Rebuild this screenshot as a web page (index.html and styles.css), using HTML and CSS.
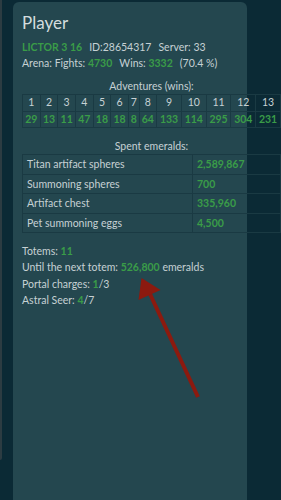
FILE: index.html
```html
<!DOCTYPE html>
<html lang="en">
<head>
  <meta charset="UTF-8" />
  <title>Player</title>
  <meta name="viewport" content="width=device-width, initial-scale=1.0" />
  <link rel="stylesheet" href="styles.css">
</head>
<body>

  <div class="page">
    <!-- kartu sebelah (hanya tepi yang terlihat) -->
    <div class="side-card"></div>

    <!-- Panel pemain -->
    <div class="panel">
      <h1>Player</h1>
      <p class="meta"><span class="hl">LICTOR 3 16</span><span>ID:28654317</span><span>Server: 33</span></p>
      <p class="meta"><span>Arena: Fights: <span class="hl">4730</span></span><span>Wins: <span class="hl">3332</span></span><span>(70.4 %)</span></p>

      <table class="adv">
        <caption>Adventures (wins):</caption>
        <tr>
          <td>1</td><td>2</td><td>3</td><td>4</td><td>5</td><td>6</td><td>7</td>
          <td>8</td><td>9</td><td>10</td><td>11</td><td>12</td><td>13</td>
        </tr>
        <tr class="wins">
          <td>29</td><td>13</td><td>11</td><td>47</td><td>18</td><td>18</td><td>8</td>
          <td>64</td><td>133</td><td>114</td><td>295</td><td>304</td><td>231</td>
        </tr>
      </table>

      <table class="spent">
        <caption>Spent emeralds:</caption>
        <tr><td>Titan artifact spheres</td><td class="val">2,589,867</td></tr>
        <tr><td>Summoning spheres</td><td class="val">700</td></tr>
        <tr><td>Artifact chest</td><td class="val">335,960</td></tr>
        <tr><td>Pet summoning eggs</td><td class="val">4,500</td></tr>
      </table>

      <div class="stats">
        <p>Totems: <span class="hl">11</span></p>
        <p>Until the next totem: <span class="hl">526,800</span> emeralds</p>
        <p>Portal charges: <span class="hl">1</span>/3</p>
        <p>Astral Seer: <span class="hl">4</span>/7</p>
      </div>
    </div>

    <!-- Panah anotasi -->
    <svg class="arrow" width="281" height="500" viewBox="0 0 281 500">
      <line x1="150" y1="294" x2="198" y2="397" stroke="#8c1a0f" stroke-width="4" />
      <polygon points="141.5,278 138.5,300 160.5,290" fill="#8c1a0f" />
    </svg>
  </div>

</body>
</html>
```

FILE: styles.css
```css
body {
  margin: 0;
  padding: 0;
  background: #0b2a35;
  font-family: 'Lato', sans-serif;
  color: #c6d1d4;
  overflow: hidden;
}

.page {
  position: relative;
  display: flex;
  align-items: flex-start;
  gap: 11px;
  height: 500px;
}

.side-card {
  width: 2px;
  height: 460px;
  background: #2c3c42;
  border-bottom-right-radius: 3px;
  flex-shrink: 0;
}

/* Panel */
.panel {
  margin-top: 2px;
  width: 216px;
  min-height: 520px;
  padding: 0 9px;
  background: #24474f;
  border-radius: 6px 6px 0 0;
  flex-shrink: 0;
}

h1 {
  margin: 0;
  padding-top: 9px;
  font-size: 17px;
  font-weight: normal;
  line-height: 24px;
  color: #d3dcde;
}

.meta {
  margin: 0;
  font-size: 10.5px;
  line-height: 16px;
  display: flex;
  gap: 7px;
}

.meta:first-of-type {
  margin-top: 4px;
}

.hl {
  color: #3a9c48;
  font-weight: bold;
}

/* Tabel */
table {
  border-collapse: collapse;
  width: 259px;
  font-size: 10.5px;
}

caption {
  line-height: 16px;
  text-align: center;
}

td {
  border: 1px solid #1a3a43;
}

.adv {
  margin-top: 7px;
}

.adv td {
  padding: 0 1px;
  text-align: center;
  line-height: 15.5px;
}

.adv .wins td {
  color: #3a9c48;
  font-weight: bold;
}

.spent {
  margin-top: 10px;
}

.spent td {
  padding: 3px 4px;
  line-height: 12.5px;
}

.spent td:first-child {
  width: 161px;
}

.spent .val {
  color: #3a9c48;
  font-weight: bold;
}

/* Statistik */
.stats {
  margin-top: 10px;
}

.stats p {
  margin: 0;
  font-size: 10.5px;
  line-height: 16.3px;
}

.arrow {
  position: absolute;
  top: 0;
  left: 0;
  pointer-events: none;
}
```
